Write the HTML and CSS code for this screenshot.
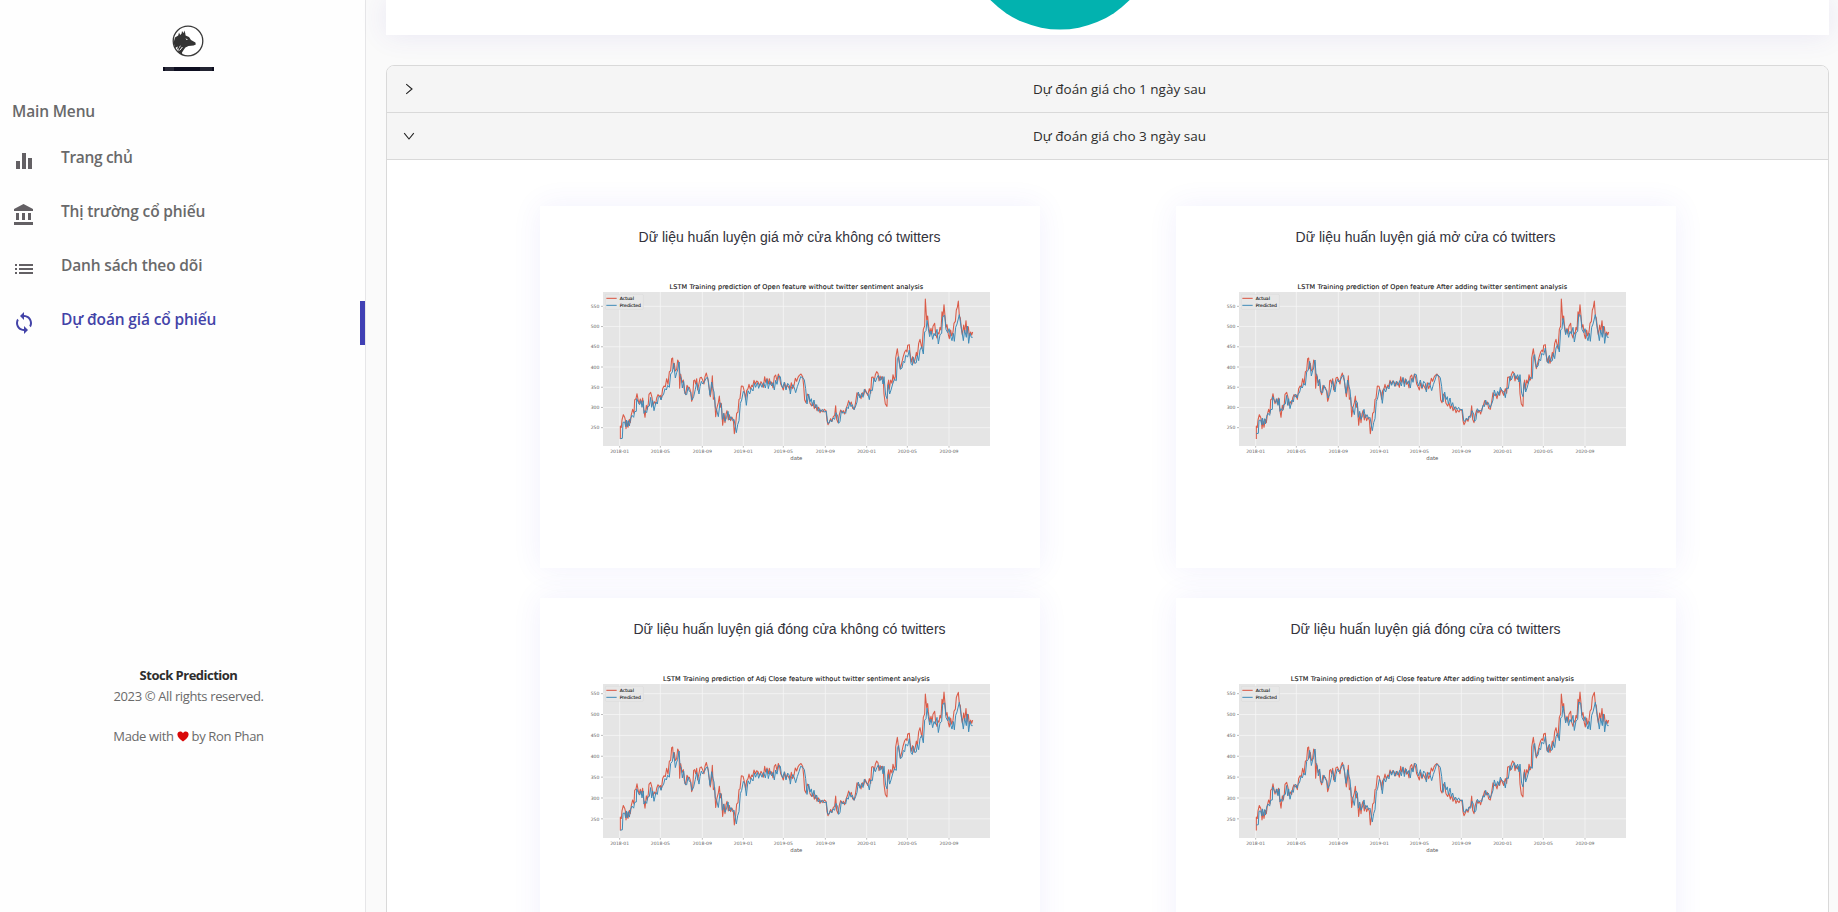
FILE: index.html
```html
<!DOCTYPE html>
<html lang="vi">
<head>
<meta charset="utf-8">
<title>Stock Prediction</title>
<link rel="stylesheet" href="styles.css">
</head>
<body>
<div class="app">
  <aside class="sidebar">
    <div class="logo">
      <svg class="logo-mark" width="32" height="32" viewBox="0 0 32 32">
        <circle cx="16" cy="16" r="14.8" fill="#fff" stroke="#3a3a3a" stroke-width="1.3"/>
        <path fill="#333" d="M7 7.5 8.2 10 9.6 8.4 10 6 11.6 8.2 12.2 5.6 13.2 8 13.6 10.4 17 12 19 15 23.4 17.4 23.8 19.4 21.6 20.6 16.5 21 13.4 22.4 11.6 25 10 27.5 10.4 30 6.2 27 6.8 23 5 24.8 5.8 21.6 3 23 1.6 17.5 3 12.5 6.2 10.5Z"/>
        <path fill="#fff" d="M13.4 13.2 16 14.4 14.6 14.9Z"/>
        <path fill="none" stroke="#fff" stroke-width="1" d="M7 22.5 8.6 21M7.6 25.5 10.4 22"/>
      </svg>
      <span class="logo-strip"></span>
    </div>
    <div class="menu-title">Main Menu</div>
    <nav class="menu">
      <a class="item"><svg class="icon" viewBox="0 0 24 24"><path d="M10 20h4V4h-4v16zm-6 0h4v-8H4v8zM16 9v11h4V9h-4z"/></svg><span class="label label-short">Trang chủ</span></a>
      <a class="item"><svg class="icon" viewBox="0 0 24 24"><path d="M4 10v7h3v-7H4zm6 0v7h3v-7h-3zM2 22h19v-3H2v3zm14-12v7h3v-7h-3zm-4.5-9L2 6v2h19V6l-9.5-5z"/></svg><span class="label">Thị trường cổ phiếu</span></a>
      <a class="item"><svg class="icon" viewBox="0 0 24 24"><path d="M3 13h2v-2H3v2zm0 4h2v-2H3v2zm0-8h2V7H3v2zm4 4h14v-2H7v2zm0 4h14v-2H7v2zM7 7v2h14V7H7z"/></svg><span class="label">Danh sách theo dõi</span></a>
      <a class="item active"><svg class="icon" viewBox="0 0 24 24"><path d="M12 4V1L8 5l4 4V6c3.31 0 6 2.69 6 6 0 1.01-.25 1.97-.7 2.8l1.46 1.46C19.54 15.03 20 13.57 20 12c0-4.42-3.58-8-8-8zm0 14c-3.31 0-6-2.69-6-6 0-1.01.25-1.97.7-2.8L5.24 7.74C4.46 8.97 4 10.43 4 12c0 4.42 3.58 8 8 8v3l4-4-4-4v3z"/></svg><span class="label">Dự đoán giá cổ phiếu</span></a>
    </nav>
    <footer class="foot">
      <strong class="foot-name">Stock Prediction</strong>
      <span>2023 © All rights reserved.</span>
      <span class="foot-made">Made with <svg class="heart" viewBox="0 0 12 11"><path d="M6 10.6C2.6 8 .4 6 .4 3.5.4 1.800 1.700.600 3.200.600 4.400.600 5.500 1.300 6 2.300 6.500 1.300 7.600.600 8.800.600 10.300.600 11.600 1.800 11.600 3.500 11.600 6 9.400 8 6 10.600Z"/></svg> by Ron Phan</span>
    </footer>
  </aside>
  <main class="main">
    <section class="panel">
      <svg class="pie" width="194" height="30" viewBox="0 0 194 30"><circle cx="97" cy="-67.500" r="97" fill="#02b2af"/></svg>
    </section>
    <section class="collapse">
      <div class="head">
        <svg class="arrow" viewBox="0 0 12 12"><path d="M3.200 1.200 9 6 3.200 10.800"/></svg>
        <span class="head-text">Dự đoán giá cho 1 ngày sau</span>
      </div>
      <div class="head">
        <svg class="arrow" viewBox="0 0 12 12"><path d="M1.200 3.200 6 9 10.800 3.200"/></svg>
        <span class="head-text">Dự đoán giá cho 3 ngày sau</span>
      </div>
      <div class="body">
        <article class="card"><h3 class="card-title">Dữ liệu huấn luyện giá mở cửa không có twitters</h3><svg class="chart" viewBox="150 240 1260 555" data-kind="open" data-tw="0" data-width="761" data-title="LSTM Training prediction of Open feature without twitter sentiment analysis"></svg></article>
        <article class="card"><h3 class="card-title">Dữ liệu huấn luyện giá mở cửa có twitters</h3><svg class="chart" viewBox="150 240 1260 555" data-kind="open" data-tw="1" data-width="809" data-title="LSTM Training prediction of Open feature After adding twitter sentiment analysis"></svg></article>
        <article class="card"><h3 class="card-title">Dữ liệu huấn luyện giá đóng cửa không có twitters</h3><svg class="chart" viewBox="150 240 1260 555" data-kind="close" data-tw="0" data-width="800" data-title="LSTM Training prediction of Adj Close feature without twitter sentiment analysis"></svg></article>
        <article class="card"><h3 class="card-title">Dữ liệu huấn luyện giá đóng cửa có twitters</h3><svg class="chart" viewBox="150 240 1260 555" data-kind="close" data-tw="1" data-width="849" data-title="LSTM Training prediction of Adj Close feature After adding twitter sentiment analysis"></svg></article>
      </div>
    </section>
  </main>
</div>
<script src="charts.js"></script>
</body>
</html>
```
FILE: styles.css
```css
* { box-sizing: border-box; }
body { margin: 0; background: #fafafa; font-family: "Open Sans", "Noto Sans", sans-serif; }
.app { display: flex; height: 912px; overflow: hidden; }

.sidebar { width: 366px; flex: none; background: #fefefe; border-right: 1px solid #e6e6e8; display: flex; flex-direction: column; }
.logo { width: 52px; margin: 25px 0 0 162px; display: flex; flex-direction: column; align-items: center; gap: 10px; }
.logo-mark { display: block; }
.logo-strip { width: 51px; height: 4px; background: linear-gradient(90deg, #0d0e20 0 4%, #282937 4% 22%, #0d0e20 22% 73%, #232432 73% 96%, #0d0e20 96%); }
.menu-title { margin: 29px 0 0 12px; height: 22px; line-height: 22px; font-size: 15.5px; font-weight: 600; letter-spacing: -.15px; color: #69696a; }
.menu { margin-top: 17px; display: flex; flex-direction: column; gap: 10px; }
.item { height: 44px; display: flex; align-items: flex-start; color: #69696a; padding-left: 12px; }
.icon { width: 24px; height: 24px; margin: 10px 25px 0 0; fill: #636064; flex: none; }
.label { margin-top: 7px; line-height: 22px; font-size: 15.5px; font-weight: 600; letter-spacing: -.15px; white-space: nowrap; }
.label-short { letter-spacing: -.32px; }
.active { color: #4343a8; border-right: 5px solid #4040b4; }
.active .icon { fill: #4343a8; }
.foot { margin: 320px 0 0; width: 377px; display: flex; flex-direction: column; align-items: center; font-size: 13px; line-height: 20.500px; letter-spacing: -.36px; color: #6a6a6a; }
.foot-name { color: #2d2d2d; font-weight: 700; letter-spacing: -.5px; }
.foot-made { margin-top: 20px; }
.heart { width: 12px; height: 11px; fill: #d90808; vertical-align: -1px; }

.main { flex: 1; min-width: 0; padding: 0 9px 0 20px; background: #fafafa; }
.panel { height: 35px; background: #fff; box-shadow: 0 0 28px rgba(82, 63, 185, .1); padding-left: 577px; }
.pie { display: block; }
.collapse { margin-top: 30px; border: 1px solid #d9d9d9; border-radius: 8px 8px 0 0; background: #fff; height: 900px; overflow: hidden; }
.head { height: 47px; background: #f5f5f5; border-bottom: 1px solid #d9d9d9; padding: 0 16px 0 16px; display: flex; align-items: center; }
.arrow { width: 12px; height: 12px; margin-right: 12px; fill: none; stroke: #222; stroke-width: 1.1; }
.head-text { flex: 1; text-align: center; font-size: 13.5px; color: #2e2e2e; }
.body { display: grid; grid-template-columns: 500px 500px; justify-content: center; column-gap: 136px; row-gap: 30px; padding-top: 46px; }
.card { height: 362px; background: #fff; box-shadow: 0 0 28px rgba(82, 63, 235, .08); padding-top: 21px; }
.card-title { margin: 0 0 32px; height: 21px; font: 400 14px/21px "Liberation Sans", Arial, sans-serif; color: #32323b; text-align: center; }
.chart { display: block; width: 420px; height: 185px; margin-left: 40px; font-family: "DejaVu Sans", sans-serif; }
.plot-bg { fill: #e5e5e5; }
.grid { stroke: #f7f7f7; stroke-width: 2.200; }
.tick { stroke: #777; stroke-width: 1.500; }
.tick-text { font-size: 13.700px; fill: #626262; }
.axis-text { font-size: 16px; fill: #555; }
.plot-title { font-size: 19.600px; fill: #111; stroke: #111; stroke-width: .3; }
.legend-box { fill: #e7e7e7; stroke: #d6d6d6; stroke-width: 1.500; }
.legend-text { font-size: 13.700px; fill: #111; stroke: #111; stroke-width: .3; }
.actual, .predicted { fill: none; stroke-width: 3.200; stroke-linejoin: round; }
.actual { stroke: #da5b48; }
.predicted { stroke: #3f8bb8; stroke-width: 3; }
```
FILE: charts.js
```js
// Series are x,y pairs on the plotting surface; y grows downwards.
const ACTUAL = `271,717 271,678 274,682 276,660 280,644 284,652 286,660 288,686 291,664 294,682 298,658 301,668 304,644 308,628 312,640 314,600 318,596 321,581 324,598 327,611 331,597 334,612 338,594 341,626 345,652 349,616 352,628 355,610 357,583 362,577 366,592 369,616 373,605 377,612 380,594 384,584 388,590 391,586 394,598 398,566 402,558 406,560 410,536 414,553 418,516 422,512 425,476 428,474 430,506 433,490 436,513 440,508 443,480 447,488 449,565 452,522 456,548 460,540 463,572 467,584 471,556 474,562 478,562 482,575 485,604 488,594 491,542 494,540 497,552 500,536 503,570 507,550 510,534 514,532 518,540 522,552 525,530 529,519 532,532 535,542 537,560 541,590 544,570 547,527 550,598 554,592 557,650 561,622 565,608 568,588 571,622 574,610 578,676 582,640 585,668 588,642 591,632 595,660 598,644 602,662 606,652 610,660 613,701 617,672 620,640 624,636 627,598 630,596 634,558 639,559 643,574 647,598 650,572 654,566 657,553 661,568 665,556 668,560 672,541 676,552 680,543 684,546 689,558 693,545 697,552 700,562 704,530 707,547 711,535 715,552 718,536 722,553 725,546 729,564 733,530 737,525 741,543 745,522 749,533 752,552 756,560 760,570 764,548 768,566 772,554 776,562 780,570 784,548 788,566 792,556 796,535 800,544 804,532 808,526 813,522 818,530 821,558 824,600 828,608 832,582 836,588 840,610 845,618 849,608 853,626 857,614 861,632 866,622 870,638 874,630 879,636 883,628 888,632 891,662 894,674 898,666 902,656 906,664 910,650 914,646 917,617 920,658 924,668 928,644 932,630 936,638 940,632 944,642 948,626 952,616 956,602 960,614 964,606 968,625 973,628 977,606 981,578 985,586 989,584 993,596 997,578 1001,586 1005,568 1009,576 1013,586 1018,566 1022,580 1025,532 1029,531 1033,542 1036,524 1040,515 1044,520 1047,543 1050,528 1054,538 1057,530 1060,542 1062,582 1066,612 1071,619 1073,556 1076,540 1078,568 1082,540 1086,550 1089,524 1093,540 1096,530 1097,474 1102,446 1106,478 1111,506 1116,486 1119,472 1124,456 1128,450 1131,456 1133,436 1138,434 1140,460 1144,486 1148,470 1152,490 1156,474 1159,457 1162,470 1166,430 1170,418 1174,438 1176,446 1180,388 1184,378 1186,297 1190,360 1193,348 1195,372 1199,400 1203,385 1206,402 1209,379 1214,370 1217,402 1221,414 1224,398 1227,402 1230,382 1233,390 1236,335 1239,350 1242,314 1245,348 1248,382 1251,374 1255,404 1258,416 1262,390 1265,408 1269,396 1272,370 1276,364 1279,330 1282,322 1285,303 1288,348 1291,354 1294,386 1297,405 1301,375 1304,397 1308,362 1311,400 1315,380 1318,408 1322,396 1325,405 1328,396`;
const PREDICTED = `271,716 277,715 279,667 284,666 287,680 289,660 292,680 295,662 298,678 302,655 306,646 311,652 314,635 319,634 320,596 325,607 329,614 333,602 336,622 340,602 342,640 345,632 350,638 353,620 358,618 362,592 365,622 368,602 372,632 378,606 382,612 385,592 389,588 393,600 396,590 401,582 405,566 409,570 413,556 418,562 422,522 427,516 431,490 436,534 440,518 443,510 447,486 450,528 454,536 457,564 461,544 465,582 470,584 474,562 478,574 482,576 486,600 491,590 496,568 500,548 507,582 510,560 514,544 518,552 523,546 528,535 533,532 537,562 540,586 545,546 549,566 552,576 556,622 560,630 565,650 570,608 574,614 577,658 581,640 585,664 590,652 594,634 598,660 603,650 608,662 612,658 619,698 623,674 627,662 631,610 635,600 640,574 645,582 649,616 654,572 659,582 664,565 669,573 673,550 677,562 682,548 686,565 691,550 696,562 701,548 706,564 711,538 715,566 720,544 725,558 729,548 733,570 737,541 741,553 746,528 751,530 754,552 758,564 763,546 768,570 773,550 778,556 781,582 784,564 789,554 793,564 797,578 802,560 807,546 812,530 819,534 823,540 827,566 831,612 836,582 840,605 844,596 847,618 852,600 856,624 860,614 865,634 869,626 873,635 878,628 882,636 889,634 893,668 897,670 901,660 905,666 909,654 914,658 918,638 923,648 926,670 930,664 934,632 939,640 943,636 947,640 951,622 955,626 959,606 963,620 967,614 972,629 977,618 981,606 985,576 990,594 995,580 999,592 1003,568 1008,578 1014,582 1018,599 1022,570 1027,572 1032,534 1036,546 1041,533 1045,526 1050,542 1055,530 1059,552 1062,530 1067,586 1071,596 1075,554 1079,582 1083,570 1088,552 1093,538 1099,542 1102,476 1106,470 1111,508 1116,504 1120,484 1124,488 1127,466 1133,471 1138,450 1143,490 1147,496 1150,472 1155,490 1159,488 1162,466 1166,482 1170,450 1175,440 1180,462 1184,396 1188,392 1191,361 1195,386 1199,410 1203,393 1208,418 1212,400 1216,408 1221,388 1225,432 1230,404 1235,400 1238,350 1244,346 1248,388 1253,398 1257,386 1262,410 1266,422 1270,400 1273,424 1277,382 1281,372 1288,344 1292,372 1297,402 1300,422 1304,390 1309,412 1312,378 1316,430 1320,400 1324,412 1328,412`;
const MONTHS = { '2018-01': 269, '2018-05': 391, '2018-09': 517, '2019-01': 640, '2019-05': 760, '2019-09': 886, '2020-01': 1010, '2020-05': 1132, '2020-09': 1257 };
const SCALES = { open: [683, 1.2133], close: [680.500, 1.2517] };

const parse = s => s.split(' ').map(p => p.split(',').map(Number));
const points = pts => pts.map(p => p.map(n => n.toFixed(1)).join(',')).join(' ');

function rescale(pts, kind) {
  if (kind === 'open') return pts;
  const [base, step] = SCALES.close;
  return pts.map(([x, y]) => [x, base - (683 - y) / 1.2133 * step]);
}

document.querySelectorAll('.chart').forEach(svg => {
  const { kind, tw, title, width } = svg.dataset;
  const [base, step] = SCALES[kind];
  let actual = rescale(parse(ACTUAL), kind);
  let predicted = parse(PREDICTED);
  if (tw === '1') {
    predicted = predicted.map(([x, y], i) => i < 2 ? [x, y - 15] : [x, y - (x > 1240 ? 0 : 6)]);
  }
  predicted = rescale(predicted, kind);
  if (kind === 'close') {
    actual = actual.map(([x, y]) => x === 1186 ? [x, 306] : x === 1285 ? [x, 301] : [x, y]);
  }
  let out = '<rect class="plot-bg" x="219" y="276" width="1161" height="462"/>';
  for (const [name, x] of Object.entries(MONTHS)) {
    out += `<path class="grid" d="M${x} 276V738"/><path class="tick" d="M${x} 738v5"/><text class="tick-text" text-anchor="middle" x="${x}" y="759">${name}</text>`;
  }
  for (let v = 250; v <= 550; v += 50) {
    const y = base - (v - 250) * step;
    out += `<path class="grid" d="M219 ${y}H1380"/><path class="tick" d="M213 ${y}h6"/><text class="tick-text" text-anchor="end" x="208" y="${y + 5}">${v}</text>`;
  }
  out += `<polyline class="actual" points="${points(actual)}"/><polyline class="predicted" points="${points(predicted)}"/>`;
  out += '<rect class="legend-box" x="226" y="283" width="114" height="45" rx="3"/><path class="actual" d="M229 295h31"/><path class="predicted" d="M229 316h31"/><text class="legend-text" x="269" y="300">Actual</text><text class="legend-text" x="269" y="320">Predicted</text>';
  out += `<text class="plot-title" text-anchor="middle" x="799" y="268" textLength="${width}">${title}</text><text class="axis-text" text-anchor="middle" x="799" y="780">date</text>`;
  svg.innerHTML = out;
});
```
